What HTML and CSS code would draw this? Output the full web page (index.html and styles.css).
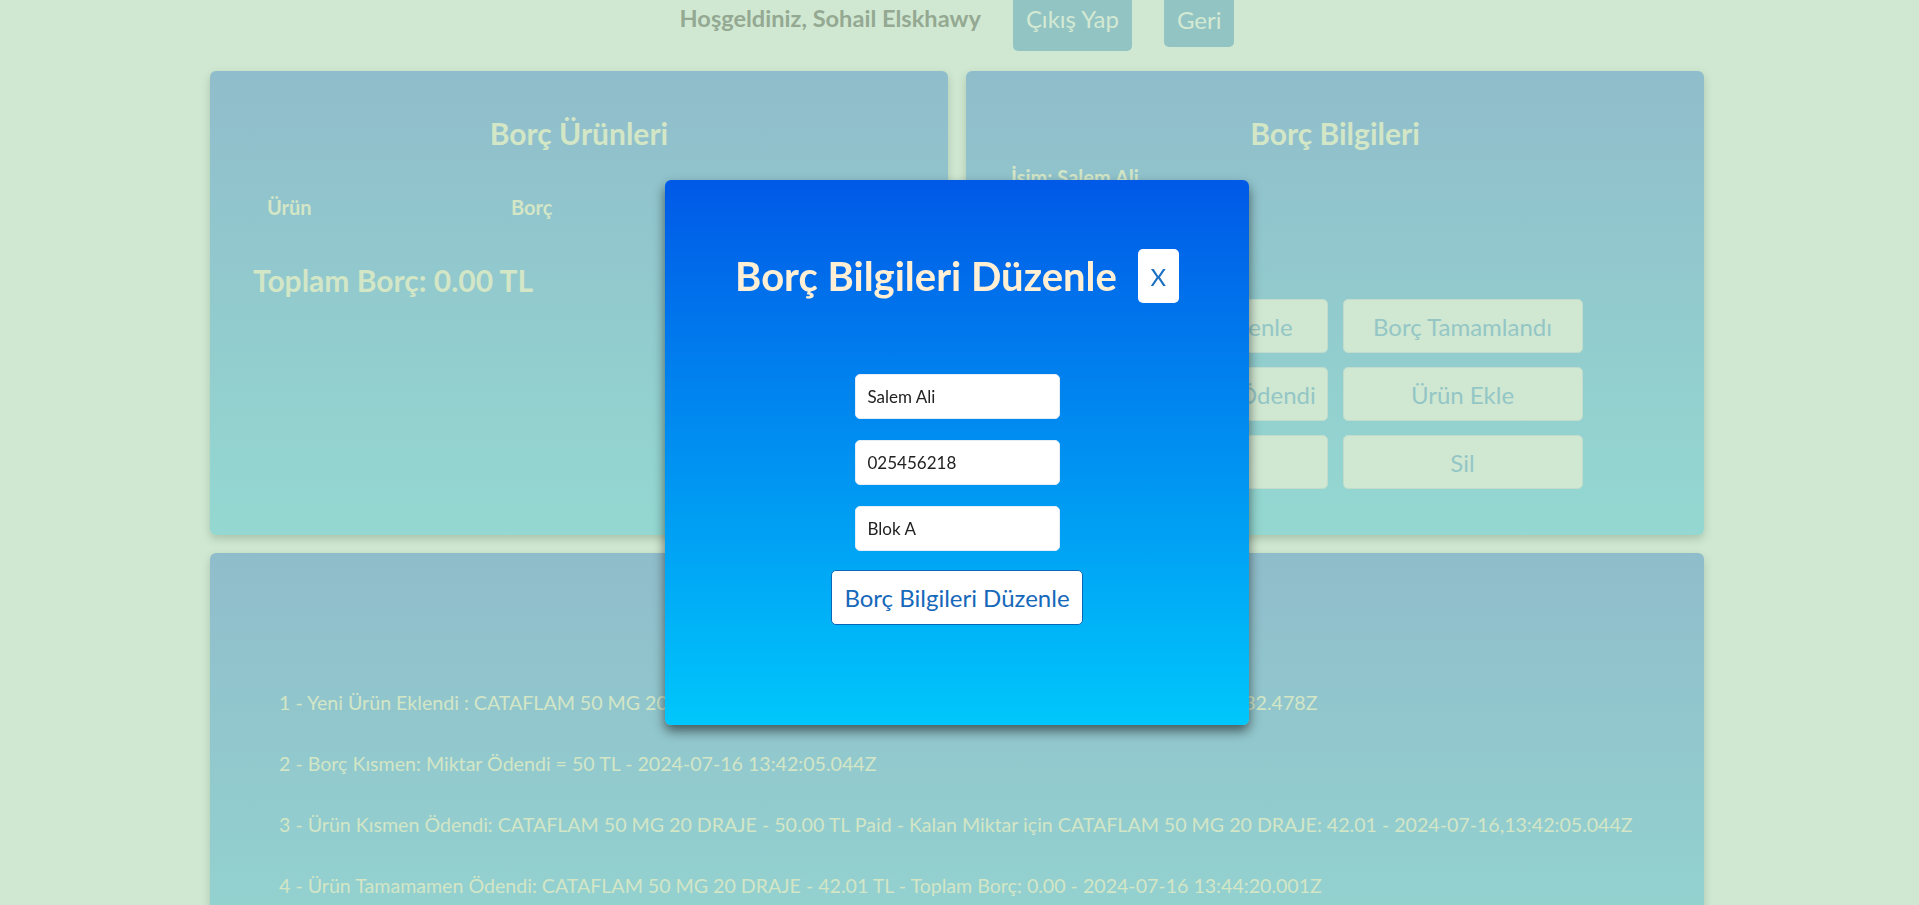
FILE: index.html
```html
<!DOCTYPE html>
<html lang="tr">
<head>
<meta charset="utf-8">
<title>Borç Bilgileri</title>
<link rel="stylesheet" href="styles.css">
</head>
<body>
<header class="header">
  <span class="welcome">Hoşgeldiniz, Sohail Elskhawy</span>
  <button class="hbtn logout">Çıkış Yap</button>
  <button class="hbtn back">Geri</button>
</header>

<main class="main">
  <div class="top-row">
    <section class="card products">
      <h2 class="card-title">Borç Ürünleri</h2>
      <div class="table-head">
        <span>Ürün</span>
        <span>Borç</span>
        <span>Miktar</span>
      </div>
      <div class="total">Toplam Borç: 0.00 TL</div>
    </section>

    <section class="card info">
      <h2 class="card-title">Borç Bilgileri</h2>
      <div class="info-lines">
        <p>İsim: Salem Ali</p>
        <p>Telefon: 025456218</p>
        <p>Adres: Blok A</p>
      </div>
      <div class="actions">
        <button class="act">Bilgileri Düzenle</button>
        <button class="act">Borç Tamamlandı</button>
        <button class="act">Borç Kısmen Ödendi</button>
        <button class="act">Ürün Ekle</button>
        <button class="act">Yazdır</button>
        <button class="act">Sil</button>
      </div>
    </section>
  </div>

  <section class="card history">
    <h2 class="card-title">Borç Geçmişi</h2>
    <div class="log">
      <p>1 - Yeni Ürün Eklendi : CATAFLAM 50 MG 20 DRAJE - Fiyat: 92.01 TL - Toplam Borç: 92.01 - 2024-07-16 13:41:32.478Z</p>
      <p>2 - Borç Kısmen: Miktar Ödendi = 50 TL - 2024-07-16 13:42:05.044Z</p>
      <p>3 - Ürün Kısmen Ödendi: CATAFLAM 50 MG 20 DRAJE - 50.00 TL Paid - Kalan Miktar için CATAFLAM 50 MG 20 DRAJE: 42.01 - 2024-07-16,13:42:05.044Z</p>
      <p>4 - Ürün Tamamamen Ödendi: CATAFLAM 50 MG 20 DRAJE - 42.01 TL - Toplam Borç: 0.00 - 2024-07-16 13:44:20.001Z</p>
    </div>
  </section>
</main>

<div class="overlay">
  <div class="modal">
    <div class="modal-head">
      <h2 class="modal-title">Borç Bilgileri Düzenle</h2>
      <button class="close">X</button>
    </div>
    <form class="modal-form">
      <input class="field" type="text" value="Salem Ali">
      <input class="field" type="text" value="025456218">
      <input class="field" type="text" value="Blok A">
      <button type="button" class="submit">Borç Bilgileri Düzenle</button>
    </form>
  </div>
</div>
</body>
</html>
```

FILE: styles.css
```css
html, body {
  overflow: hidden;
}

body {
  margin: 0;
  padding-right: 5px;
  background: #d0e8d2;
  font-family: Lato, "Noto Sans", sans-serif;
}

/* ---------- header ---------- */
.header {
  display: flex;
  justify-content: center;
  align-items: flex-start;
  gap: 32px;
  margin-top: -12px;
  margin-bottom: 20px;
}

.welcome {
  padding-top: 16px;
  font-size: 23.6px;
  line-height: 29px;
  font-weight: 700;
  color: #94a892;
}

.hbtn {
  font-family: Lato, "Noto Sans", sans-serif;
  font-size: 24px;
  line-height: 29px;
  color: #d3e9d2;
  background: #93c4c4;
  border: none;
  border-radius: 5px;
  padding: 0 13px;
}

.logout {
  height: 63px;
  padding-bottom: 2px;
}

.back {
  height: 59px;
  padding-top: 3px;
}

/* ---------- cards ---------- */
.main {
  width: 1494px;
  margin: 0 auto;
}

.top-row {
  display: flex;
  gap: 18px;
}

.card {
  background: linear-gradient(to bottom, #90bdcb, #94d8d1);
  border-radius: 6px;
  box-shadow: 0 4px 8px rgba(60, 90, 60, 0.25);
  color: #d3e6c6;
  box-sizing: border-box;
}

.products,
.info {
  flex: 1 1 0;
  min-width: 0;
  height: 464px;
}

.card-title {
  margin: 44px 0 0;
  font-size: 30px;
  line-height: 36px;
  font-weight: 700;
  text-align: center;
}

.table-head {
  display: grid;
  grid-template-columns: 244px 244px 150px;
  margin-top: 44px;
  padding-left: 57px;
  font-size: 20px;
  line-height: 24px;
  font-weight: 700;
}

.total {
  margin-top: 43px;
  padding-left: 43px;
  font-size: 30px;
  line-height: 36px;
  font-weight: 700;
}

.info-lines {
  margin-top: 14px;
  padding-left: 45px;
  display: flex;
  flex-direction: column;
  gap: 14px;
}

.info-lines p {
  margin: 0;
  font-size: 20px;
  line-height: 24px;
  font-weight: 700;
}

.actions {
  display: grid;
  grid-template-columns: 240px 240px;
  column-gap: 15px;
  row-gap: 14px;
  justify-content: center;
  margin-top: 34px;
}

.act {
  height: 54px;
  padding: 0;
  font-family: Lato, "Noto Sans", sans-serif;
  font-size: 24px;
  color: #94c6c6;
  background: #d0e8d2;
  border: 1px solid #c2dccc;
  border-radius: 5px;
}

.history {
  display: flow-root;
  margin-top: 18px;
  height: 470px;
}

.log {
  margin-top: 58px;
  padding-left: 69px;
  display: flex;
  flex-direction: column;
  gap: 37px;
}

.log p {
  margin: 0;
  font-size: 19.6px;
  line-height: 24px;
  white-space: nowrap;
}

/* ---------- modal ---------- */
.overlay {
  position: fixed;
  inset: 0;
  padding-right: 5px;
  display: flex;
  align-items: center;
  justify-content: center;
}

.modal {
  width: 584px;
  height: 545px;
  box-sizing: border-box;
  padding-top: 69px;
  border-radius: 6px;
  background: linear-gradient(to bottom, #0059e7, #00c7fb);
  box-shadow: 0 6px 12px rgba(0, 0, 0, 0.55);
}

.modal-head {
  display: flex;
  justify-content: center;
  align-items: center;
  gap: 21px;
}

.modal-title {
  margin: 0;
  font-size: 40px;
  line-height: 48px;
  font-weight: 700;
  color: #ffefd5;
}

.close {
  width: 41px;
  height: 54px;
  padding: 0;
  font-family: Lato, "Noto Sans", sans-serif;
  font-size: 24px;
  color: #1c70c2;
  background: #fff;
  border: none;
  border-radius: 5px;
}

.modal-form {
  margin-top: 71px;
  display: flex;
  flex-direction: column;
  align-items: center;
  gap: 21px;
}

.field {
  width: 205px;
  height: 45px;
  box-sizing: border-box;
  padding: 0 12px;
  font-family: Lato, "Noto Sans", sans-serif;
  font-size: 17px;
  color: #222;
  background: #fff;
  border: 1px solid #e6eef5;
  border-radius: 5px;
}

.submit {
  margin-top: -2px;
  width: 252px;
  height: 55px;
  padding: 0;
  font-family: Lato, "Noto Sans", sans-serif;
  font-size: 24px;
  color: #1668ba;
  background: #fff;
  border: 1px solid #0b66b8;
  border-radius: 5px;
}
```
